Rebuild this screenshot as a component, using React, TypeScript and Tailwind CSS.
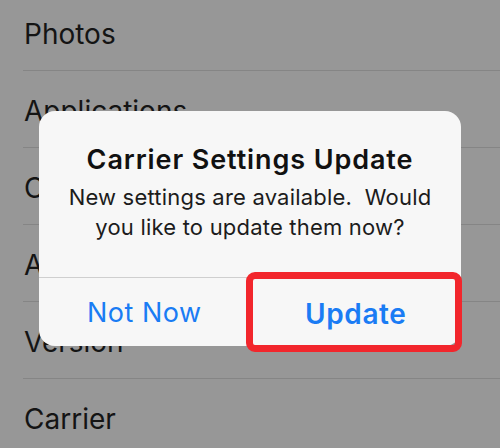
import React from "react";

const rows = ["Photos", "Applications", "Capacity", "Available", "Version", "Carrier"];

export default function App() {
  return (
    <div
      className="relative w-[500px] h-[448px] overflow-hidden bg-[#979797]"
      style={{ fontFamily: "Inter, 'Liberation Sans', sans-serif" }}
    >
      {/* SETTINGS LIST (dimmed) */}
      <div className="-mt-[6px] pl-[23px]">
        {rows.map((r) => (
          <div
            key={r}
            className="h-[77px] flex items-center pt-[3px] border-b border-[#858585] text-[28px] text-[#141414]"
          >
            <span className="pl-[1px]">{r}</span>
          </div>
        ))}
      </div>

      {/* ALERT */}
      <div className="absolute left-[39px] top-[111px] w-[422px] h-[235px] rounded-[16px] bg-[#f7f7f7] flex flex-col">
        <div className="h-[166px] flex flex-col items-center pt-[33px] text-center">
          <h1 className="text-[27px] leading-[32px] tracking-[0.9px] font-semibold text-[#111]">
            Carrier Settings Update
          </h1>
          <p className="mt-[6px] text-[22px] leading-[30px] tracking-[0.2px] text-[#1c1c1c]">
            <span className="block whitespace-pre">New settings are available.  Would</span>
            <span className="block">you like to update them now?</span>
          </p>
        </div>
        <div className="flex-1 flex border-t border-[#cfcfcf]">
          <button className="flex-1 flex items-center justify-center pt-[3px] text-[27px] tracking-[0.5px] text-[#1a7cf4]">
            Not Now
          </button>
          <div className="w-px bg-[#cfcfcf]" />
          <button className="flex-1 flex items-center justify-center pt-[3px] text-[28px] tracking-[0.6px] font-semibold text-[#1a7cf4]">
            Update
          </button>
        </div>
        {/* highlight box */}
        <div className="absolute left-[207px] top-[161px] w-[216px] h-[80px] rounded-[9px] border-[7px] border-[#f2262c]" />
      </div>
    </div>
  );
}
